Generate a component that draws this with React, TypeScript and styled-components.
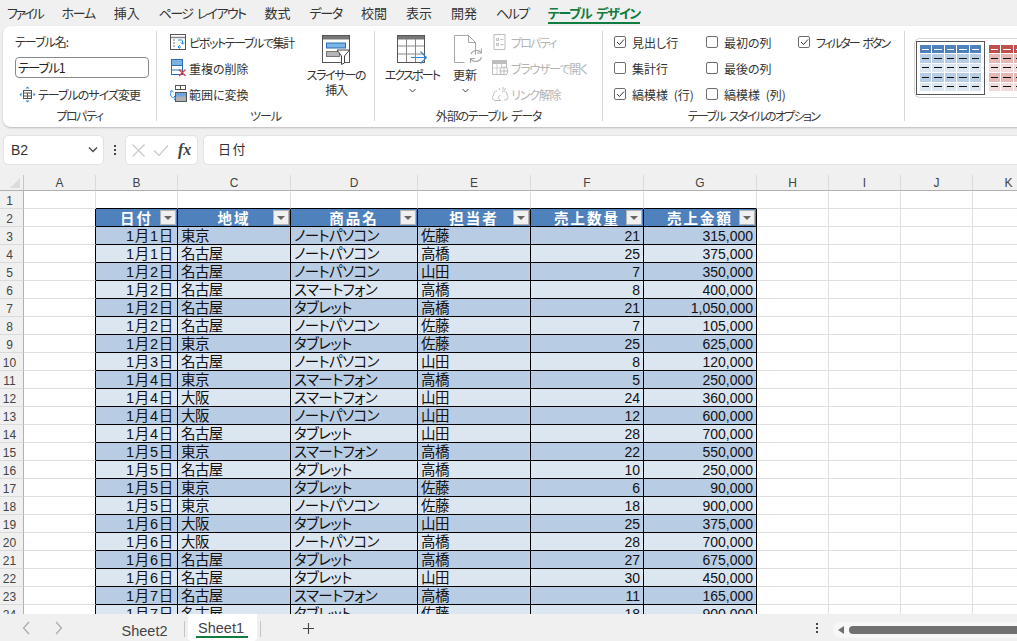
import React from "react";
import styled, { createGlobalStyle } from "styled-components";

const uiFont = `"Noto Sans CJK JP", "Noto Sans", sans-serif`;
const cellFont = `"Liberation Sans", "Noto Sans CJK JP", sans-serif`;

const Global = createGlobalStyle`
  html, body { margin: 0; padding: 0; height: 100%; background: #f0f0f0; overflow: hidden; }
  #root { height: 641px; width: 1017px; overflow: hidden; }
  * { box-sizing: border-box; }
`;

const Page = styled.div`
  width: 1017px; height: 641px; display: flex; flex-direction: column;
  background: #f0f0f0; font-family: ${uiFont}; color: #262626; overflow: hidden;
  font-feature-settings: "palt"; word-spacing: 3px;
`;

const MenuBar = styled.nav`
  height: 26px; flex: none; display: flex; align-items: flex-start; padding: 3px 0 0 7px; gap: 19px;
  font-size: 13px; line-height: 19px; color: #333;
`;
const MenuItem = styled.span<{ $active?: boolean; $s?: number }>`
  white-space: nowrap; height: 21px; letter-spacing: ${p => p.$s ?? 0}px;
  color: ${p => (p.$active ? "#107c41" : "#333")};
  font-weight: ${p => (p.$active ? 700 : 400)};
  border-bottom: ${p => (p.$active ? "2px solid #107c41" : "none")};
`;

const Ribbon = styled.section`
  height: 101px; flex: none; margin-left: 3px; width: 1030px; background: #fff; border-radius: 8px;
  box-shadow: 0 1px 2px rgba(0,0,0,.22); display: flex; padding-top: 5px; overflow: hidden;
`;
const Group = styled.div<{ $w: number }>`
  width: ${p => p.$w}px; flex: none; height: 90px; border-right: 1px solid #d6d6d6;
  display: flex; flex-direction: column;
`;
const GroupBody = styled.div`
  height: 72px; flex: none; display: flex;
`;
const GroupLabel = styled.div<{ $s: number }>`
  flex: 1; display: flex; align-items: center; justify-content: center; font-size: 12px; line-height: 16px; color: #3a3a3a; white-space: nowrap; padding-top: 5px;
  letter-spacing: ${p => p.$s}px;
`;
const Column = styled.div<{ $pad?: string; $w?: number }>`
  display: flex; flex-direction: column; padding: ${p => p.$pad || "0"}; ${p => (p.$w ? `width:${p.$w}px;flex:none;` : "")}
`;
const SmallColumn = styled(Column)`
  margin-top: -2px;
`;
const PropLabel = styled.div`
  font-size: 12px; line-height: 18px; height: 26px; flex: none; padding: 2px 0 0 12px; color: #333; letter-spacing: -1px;
`;
const NameInput = styled.div`
  margin-left: 12px; width: 134px; height: 21px; flex: none; border: 1px solid #8a8a8a; border-radius: 4px;
  font-size: 12.5px; line-height: 19px; padding-left: 2px; color: #222; letter-spacing: -1.2px;
`;
const SmallBtn = styled.div<{ $off?: boolean; $s?: number }>`
  height: 26px; flex: none; display: flex; align-items: center; gap: 2px; font-size: 12px; white-space: nowrap;
  color: ${p => (p.$off ? "#b4b4b4" : "#333")};
  letter-spacing: ${p => p.$s ?? 0}px;
  svg { flex: none; }
`;
const BigBtn = styled.div<{ $w: number; $s?: number }>`
  width: ${p => p.$w}px; flex: none; display: flex; flex-direction: column; align-items: center;
  font-size: 12px; line-height: 15px; text-align: center; color: #333; padding-top: 4px; white-space: nowrap;
  letter-spacing: ${p => p.$s ?? 0}px;
  svg { flex: none; margin-bottom: 2px; }
`;
const Chevron = styled.svg`
  display: block; margin-top: 6px;
`;

const CheckRow = styled.div<{ $s?: number }>`
  height: 26px; flex: none; display: flex; align-items: center; gap: 6px; font-size: 12px; white-space: nowrap; color: #333;
  letter-spacing: ${p => p.$s ?? 0}px;
`;
const CheckBox = styled.span`
  width: 12px; height: 12px; flex: none; border: 1px solid #6e6e6e; border-radius: 2px; display: flex; align-items: center; justify-content: center;
`;

const Gallery = styled.div`
  margin: 7px 0 0 9px; width: 140px; height: 60px; border: 1px solid #d8d8d8; border-right: none; border-radius: 6px 0 0 6px;
  padding: 2px 0 0 1px; display: flex; overflow: hidden;
`;
const Swatch = styled.div<{ $sel?: boolean }>`
  width: 69px; height: 54px; flex: none; padding: 3px; border: 1px solid ${p => (p.$sel ? "#555" : "transparent")};
  display: grid; grid-template-columns: repeat(5, 11.4px); grid-auto-rows: 8.4px; gap: 1px;
`;
const SwatchCell = styled.div<{ $bg: string; $dash: string }>`
  background: ${p => p.$bg}; position: relative;
  &::after { content: ""; position: absolute; left: 2px; right: 2px; top: 3.5px; height: 1px; background: ${p => p.$dash}; }
`;

const FormulaBar = styled.div`
  height: 30px; flex: none; margin-top: 8px; display: flex; align-items: stretch; padding-left: 3px;
`;
const NameBox = styled.div`
  width: 101px; background: #fff; border: 1px solid #e2e2e2; border-radius: 5px; display: flex; align-items: center; justify-content: space-between;
  padding: 0 4px 0 7px; font-size: 14px; color: #333; font-family: "Liberation Sans", sans-serif;
`;
const Dots = styled.div`
  width: 21px; display: flex; flex-direction: column; align-items: center; justify-content: center; gap: 2px;
`;
const Dot = styled.i`
  width: 2px; height: 2px; background: #444; display: block;
`;
const FxBox = styled.div`
  width: 73px; background: #fff; border: 1px solid #e2e2e2; border-radius: 5px; display: flex; align-items: center; gap: 8px; padding-left: 6px;
`;
const Fx = styled.span`
  font-family: "Liberation Serif", serif; font-style: italic; font-weight: 700; font-size: 16px; color: #444; margin-left: 1px;
`;
const FormulaInput = styled.div`
  flex: 1; margin-left: 5px; background: #fff; border: 1px solid #e2e2e2; border-right: none; border-radius: 5px 0 0 5px; padding-left: 14px;
  font-size: 13px; line-height: 26px; color: #333; letter-spacing: 1.5px;
`;

const SheetArea = styled.div`
  margin-top: 10px; height: 439px; flex: none; overflow: hidden; background: #fff;
`;
const Grid = styled.div`
  display: grid;
  grid-template-columns: 24px 72px 82px 113px 127px 113px 113px 113px 72px 72px 72px 72px;
  grid-auto-rows: 18px; width: 1044px;
  grid-template-rows: 16px;
`;
const Corner = styled.div`
  background: #f0f0f0; border-right: 1px solid #c6c6c6; border-bottom: 1px solid #b0b0b0; position: relative; overflow: hidden;
  &::after { content: ""; position: absolute; right: 3px; bottom: 2px; border-style: solid; border-width: 0 0 10px 10px; border-color: transparent transparent #dcdcdc transparent; }
`;
const ColHead = styled.div`
  background: #f0f0f0; border-right: 1px solid #dadada; border-bottom: 1px solid #b0b0b0; font-family: "Liberation Sans", sans-serif;
  font-size: 12px; color: #444; text-align: center; line-height: 17px;
`;
const RowHead = styled.div`
  background: #f0f0f0; border-right: 1px solid #b0b0b0; border-bottom: 1px solid #dadada; font-family: "Liberation Sans", sans-serif;
  font-size: 12px; color: #444; text-align: center; line-height: 20px; padding-right: 4px;
`;
const Empty = styled.div<{ $edgeRight?: boolean; $edgeBottom?: boolean }>`
  border-right: 1px solid ${p => (p.$edgeRight ? "#000" : "#dfdfdf")};
  border-bottom: 1px solid ${p => (p.$edgeBottom ? "#000" : "#dfdfdf")};
  background: #fff;
`;
const HeadCell = styled.div`
  background: #4f81bd; color: #fff; font-size: 14.5px; font-weight: 700; line-height: 17px; white-space: nowrap; position: relative;
  border-right: 1px solid #000; border-bottom: 1px solid #000; display: flex; justify-content: center; align-items: center;
  letter-spacing: 2px; font-family: ${uiFont}; font-feature-settings: normal;
`;
const FilterBtn = styled.span`
  position: absolute; right: 1px; top: 1px; width: 16px; height: 15px; background: #f0f0f0; border: 1px solid #b5b5b5; display: flex; align-items: center; justify-content: center;
  &::after { content: ""; border-style: solid; border-width: 4px 4px 0 4px; border-color: #666 transparent transparent transparent; }
`;
const Cell = styled.div<{ $odd: boolean; $kind: "date" | "text" | "num" }>`
  background: ${p => (p.$odd ? "#b8cce4" : "#dce6f1")}; border-right: 1px solid #000; border-bottom: 1px solid #000;
  font-family: ${cellFont}; line-height: 19px; color: #111; white-space: nowrap; overflow: hidden;
  text-align: ${p => (p.$kind === "text" ? "left" : "right")};
  padding: ${p => (p.$kind === "text" ? "0 0 0 3px" : "0 3px 0 0")};
  letter-spacing: ${p => (p.$kind === "date" ? ".7px" : p.$kind === "text" ? "-.6px" : "0")};
  font-size: ${p => (p.$kind === "num" ? "14px" : "14.5px")};
`;

const BottomBar = styled.div`
  flex: 1; display: flex; align-items: stretch; background: #f0f0f0;
`;
const NavArrows = styled.div`
  width: 108px; flex: none; display: flex; align-items: center; gap: 23px; padding-left: 22px;
`;
const TabItem = styled.div<{ $active?: boolean }>`
  width: ${p => (p.$active ? "69px" : "73px")}; flex: none; font-family: "Liberation Sans", sans-serif; font-size: 14.5px; text-align: center; color: #444;
  line-height: 20px; height: 27px; padding-top: ${p => (p.$active ? "4px" : "7px")};
  padding-right: ${p => (p.$active ? "3px" : "0")};
  background: ${p => (p.$active ? "#fff" : "transparent")};
  border-radius: ${p => (p.$active ? "0 0 4px 4px" : "0")};
  position: relative;
  ${p => (p.$active ? `&::after { content: ""; position: absolute; left: 8px; right: 9px; bottom: 3px; height: 2px; background: #107c41; }` : "")}
`;
const TabSep = styled.div`
  width: 1px; height: 16px; background: #c4c4c4; margin: 7px 3px 0 3px; flex: none;
`;
const Plus = styled.div`
  width: 88px; flex: none; display: flex; align-items: center; justify-content: center; padding-top: 2px;
`;
const Spacer = styled.div`
  flex: 1;
`;
const BottomDots = styled(Dots)`
  width: 14px; margin-right: 9px;
`;
const ScrollTrack = styled.div`
  width: 184px; flex: none; height: 16px; margin-top: 8px; background: #f7f7f7; border-radius: 8px 0 0 8px; display: flex; align-items: center; padding-left: 5px; gap: 5px;
`;
const ScrollThumb = styled.div`
  flex: 1; height: 8px; background: #707070; border-radius: 4px 0 0 4px;
`;
const ScrollLeft = styled.span`
  border-style: solid; border-width: 4px 6px 4px 0; border-color: transparent #707070 transparent transparent; flex: none;
`;

const PivotIcon = () => (
  <svg width="18" height="18" viewBox="-1 -1 18 18" fill="none"><rect x=".5" y=".5" width="15" height="15" fill="#fff" stroke="#555"/><path d="M1 3.500h14" stroke="#888" strokeWidth="1.500"/><path d="M3 6h2M3 9h2M3 12h2" stroke="#777"/><path d="M8 6h3.500a1 1 0 0 1 1 1v3M11 8.500l1.500 1.700L14 8.500M11 13H8.500M10 11l-2 2 2 1.500" stroke="#2b88d8"/></svg>
);
const DedupeIcon = () => (
  <svg width="18" height="18" viewBox="0 0 18 18" fill="none"><rect x="2.500" y=".5" width="11" height="15" fill="#fff" stroke="#2a6fb5"/><rect x="3" y="1" width="10" height="5" fill="#7db2e0"/><path d="M3 6.500h10M3 11h10" stroke="#2a6fb5"/><path d="M10 10.500l6.500 6.500M16.500 10.500L10 17" stroke="#e0394a" strokeWidth="1.300"/></svg>
);
const ConvertIcon = () => (
  <svg width="18" height="18" viewBox="0 0 18 18" fill="none"><rect x="6.500" y=".5" width="5" height="4" stroke="#555"/><rect x="11.500" y=".5" width="5" height="4" stroke="#555"/><rect x="6.500" y="7.500" width="11" height="9" fill="#b0b0b0" stroke="#555"/><rect x="7" y="8" width="10" height="3.500" fill="#6aa5dc"/><path d="M2.500 6.500c-2 3-1 6.500 4 6.500M5 11l2 2-2 2M1 7l1.500-1.500L4.500 7" stroke="#2b88d8" fill="none"/></svg>
);
const ResizeIcon = () => (
  <svg width="17" height="17" viewBox="0 0 17 17" fill="none"><rect x="4.500" y="4.500" width="8" height="8" stroke="#555"/><path d="M4.500 7h8M4.500 10h8M8.500 7v5.500" stroke="#555"/><path d="M8.500 .5l-2 2h4zM8.500 16.500l-2-2h4zM.5 8.500l2-2v4zM16.500 8.500l-2-2v4z" fill="#2b88d8"/></svg>
);
const SlicerIcon = () => (
  <svg width="28" height="30" viewBox="0 0 28 30" fill="none"><rect x=".5" y=".5" width="27" height="27" fill="#fff" stroke="#555"/><rect x="1" y="1" width="26" height="3.500" fill="#777"/><rect x="4.500" y="8" width="19" height="5" fill="#7db4e6" stroke="#2a6fb5"/><rect x="4.500" y="16.500" width="13" height="5" fill="#b5b5b5" stroke="#777"/><path d="M15 15h12.500l-5 6v7l-3 1.500V21z" fill="#fff" stroke="#444"/></svg>
);
const ExportIcon = () => (
  <svg width="30" height="30" viewBox="0 0 30 30" fill="none"><rect x=".5" y=".5" width="27" height="27" fill="#fff" stroke="#555"/><rect x="1" y="1" width="26" height="3.500" fill="#777"/><path d="M1 11h26M1 19h26M9.500 4v23M18.500 4v23" stroke="#888"/><path d="M14 22.500h15M23.500 16.500l6 6-6 6" stroke="#2b88d8" strokeWidth="1.200" fill="none"/></svg>
);
const RefreshIcon = () => (
  <svg width="34" height="30" viewBox="-6 0 34 30" fill="none"><path d="M.5.500h14l7 7v12M.5.500v27h10" stroke="#a8a8a8" fill="#fff"/><path d="M14.500.500v7h7" stroke="#a8a8a8"/><path d="M17 19a6 6 0 0 1 10-1.500M27.500 22a6 6 0 0 1-11 1.500" stroke="#a8a8a8" strokeWidth="1.200"/><path d="M27.500 13.500v4.500h-4.500M16.500 28v-4.500H21" stroke="#a8a8a8" strokeWidth="1.200"/></svg>
);
const PropIcon = () => (
  <svg width="18" height="16" viewBox="-1.500 0 18 16" fill="none"><path d="M1.500.500h11v15h-11z" stroke="#bdbdbd"/><path d="M4 4.500h2v2H4zM4 9.500h2v2H4z" stroke="#bdbdbd"/><path d="M8 5.500h3M8 10.500h3" stroke="#bdbdbd"/></svg>
);
const BrowserIcon = () => (
  <svg width="18" height="16" viewBox="0 0 18 16" fill="none"><rect x="1.500" y=".5" width="14" height="14" stroke="#bdbdbd"/><rect x="2" y="1" width="13" height="3" fill="#bdbdbd"/><path d="M2 8h13M6 4v10M10.500 4v10" stroke="#cfcfcf"/><circle cx="13" cy="11" r="4" fill="#fff" stroke="#bdbdbd"/><path d="M9 11h8M13 7v8" stroke="#bdbdbd"/></svg>
);
const UnlinkIcon = () => (
  <svg width="18" height="17" viewBox="0 0 18 17" fill="none"><path d="M6 5a3 3 0 0 0-3 4 3 3 0 0 0 1 5.500h6M11 6a3 3 0 0 1 5 3 3 3 0 0 1-1 5h-2" stroke="#bdbdbd"/><path d="M9 9.500c-2 0-2 4 0 4M12 1v3M15 2l-2 2M8 2l1 2" stroke="#bdbdbd"/></svg>
);
const Tick = () => (
  <svg width="9" height="8" viewBox="0 0 9 8" fill="none"><path d="M1 4l2.500 2.500L8 1.500" stroke="#333" strokeWidth="1"/></svg>
);
const ChevronDown = () => (
  <Chevron width="7" height="5" viewBox="0 0 7 5" fill="none"><path d="M.5 1l3 3 3-3" stroke="#444"/></Chevron>
);
const Arrow = ({ d }: { d: string }) => (
  <svg width="9" height="14" viewBox="0 0 9 14" fill="none"><path d={d} stroke="#aaa" strokeWidth="1.200"/></svg>
);

const checks: [string, boolean, number][][] = [
  [["見出し行", true, 0], ["集計行", false, 0], ["縞模様 (行)", true, 0]],
  [["最初の列", false, 0], ["最後の列", false, 0], ["縞模様 (列)", false, 0]],
  [["フィルター ボタン", true, -2]],
];

const blue = { head: "#4f81bd", a: "#b8cce4", b: "#dce6f1" };
const red = { head: "#c0504d", a: "#e6b8b7", b: "#f2dcdb" };
const StyleSwatch = ({ c, sel }: { c: typeof blue; sel?: boolean }) => (
  <Swatch $sel={sel}>
    {[c.head, c.a, c.b, c.a, c.b].flatMap((bg, r) =>
      [0, 1, 2, 3, 4].map(i => <SwatchCell key={`${r}-${i}`} $bg={bg} $dash={r === 0 ? "#fff" : "#111"} />)
    )}
  </Swatch>
);

const menus: [string, number][] = [["ファイル", -2.4], ["ホーム", -1.3], ["挿入", 0], ["ページ レイアウト", -1.6], ["数式", 0], ["データ", -1.3], ["校閲", 0], ["表示", 0], ["開発", 0], ["ヘルプ", -1.5]];
const cols = ["A", "B", "C", "D", "E", "F", "G", "H", "I", "J", "K"];
const headers = ["日付", "地域", "商品名", "担当者", "売上数量", "売上金額"];
const rows: string[][] = [
  ["1月1日", "東京", "ノートパソコン", "佐藤", "21", "315,000"],
  ["1月1日", "名古屋", "ノートパソコン", "高橋", "25", "375,000"],
  ["1月2日", "名古屋", "ノートパソコン", "山田", "7", "350,000"],
  ["1月2日", "名古屋", "スマートフォン", "高橋", "8", "400,000"],
  ["1月2日", "名古屋", "タブレット", "高橋", "21", "1,050,000"],
  ["1月2日", "名古屋", "ノートパソコン", "佐藤", "7", "105,000"],
  ["1月2日", "東京", "タブレット", "佐藤", "25", "625,000"],
  ["1月3日", "名古屋", "ノートパソコン", "山田", "8", "120,000"],
  ["1月4日", "東京", "スマートフォン", "高橋", "5", "250,000"],
  ["1月4日", "大阪", "スマートフォン", "山田", "24", "360,000"],
  ["1月4日", "大阪", "ノートパソコン", "山田", "12", "600,000"],
  ["1月4日", "名古屋", "タブレット", "山田", "28", "700,000"],
  ["1月5日", "東京", "スマートフォン", "高橋", "22", "550,000"],
  ["1月5日", "名古屋", "タブレット", "高橋", "10", "250,000"],
  ["1月5日", "東京", "タブレット", "佐藤", "6", "90,000"],
  ["1月5日", "東京", "ノートパソコン", "佐藤", "18", "900,000"],
  ["1月6日", "大阪", "タブレット", "山田", "25", "375,000"],
  ["1月6日", "大阪", "ノートパソコン", "高橋", "28", "700,000"],
  ["1月6日", "名古屋", "タブレット", "高橋", "27", "675,000"],
  ["1月6日", "名古屋", "タブレット", "山田", "30", "450,000"],
  ["1月7日", "名古屋", "スマートフォン", "高橋", "11", "165,000"],
  ["1月7日", "名古屋", "タブレット", "佐藤", "18", "900,000"],
];

const Tail = () => (
  <>
    {[0, 1, 2, 3].map(i => <Empty key={i} />)}
  </>
);

export default function App() {
  return (
    <Page>
      <Global />
      <MenuBar>
        {menus.map(([m, s]) => <MenuItem key={m} $s={s}>{m}</MenuItem>)}
        <MenuItem $active $s={-1.2}>テーブル デザイン</MenuItem>
      </MenuBar>
      <Ribbon>
        <Group $w={154}>
          <GroupBody>
            <Column>
              <PropLabel>テーブル名:</PropLabel>
              <NameInput>テーブル1</NameInput>
              <Column $pad="3px 0 0 16px"><SmallBtn $s={-1}><ResizeIcon />テーブルのサイズ変更</SmallBtn></Column>
            </Column>
          </GroupBody>
          <GroupLabel $s={-1.5}>プロパティ</GroupLabel>
        </Group>
        <Group $w={218}>
          <GroupBody>
            <SmallColumn $pad="0 0 0 12px" $w={146}>
              <SmallBtn $s={-1.4}><PivotIcon />ピボットテーブルで集計</SmallBtn>
              <SmallBtn><DedupeIcon />重複の削除</SmallBtn>
              <SmallBtn><ConvertIcon />範囲に変換</SmallBtn>
            </SmallColumn>
            <BigBtn $w={66} $s={-1.3}><SlicerIcon />スライサーの<br />挿入</BigBtn>
          </GroupBody>
          <GroupLabel $s={-1}>ツール</GroupLabel>
        </Group>
        <Group $w={228}>
          <GroupBody>
            <BigBtn $w={74} $s={-1.8}><ExportIcon />エクスポート<ChevronDown /></BigBtn>
            <BigBtn $w={32}><RefreshIcon />更新<ChevronDown /></BigBtn>
            <SmallColumn $pad="0 0 0 10px">
              <SmallBtn $off $s={-1.8}><PropIcon />プロパティ</SmallBtn>
              <SmallBtn $off $s={-1.2}><BrowserIcon />ブラウザーで開く</SmallBtn>
              <SmallBtn $off $s={-1.2}><UnlinkIcon />リンク解除</SmallBtn>
            </SmallColumn>
          </GroupBody>
          <GroupLabel $s={-1.2}>外部のテーブル データ</GroupLabel>
        </Group>
        <Group $w={302}>
          <GroupBody>
            {checks.map((col, i) => (
              <SmallColumn key={i} $w={i === 2 ? 110 : 92} $pad="0 0 0 11px">
                {col.map(([label, on, s]) => (
                  <CheckRow key={label} $s={s}>
                    <CheckBox>{on && <Tick />}</CheckBox>{label}
                  </CheckRow>
                ))}
              </SmallColumn>
            ))}
          </GroupBody>
          <GroupLabel $s={-1.7}>テーブル スタイルのオプション</GroupLabel>
        </Group>
        <Gallery>
          <StyleSwatch c={blue} sel />
          <StyleSwatch c={red} />
        </Gallery>
      </Ribbon>
      <FormulaBar>
        <NameBox>B2<svg width="12" height="8" viewBox="0 0 12 8" fill="none"><path d="M2 1.500l4 4 4-4" stroke="#444" strokeWidth="1.300"/></svg></NameBox>
        <Dots><Dot /><Dot /><Dot /></Dots>
        <FxBox>
          <svg width="13" height="13" viewBox="0 0 13 13" fill="none"><path d="M.5.500l12 12M12.500.500l-12 12" stroke="#c8c8c8" strokeWidth="1.200"/></svg>
          <svg width="16" height="13" viewBox="0 0 16 13" fill="none"><path d="M1 6.500l5 5L15 1.500" stroke="#c8c8c8" strokeWidth="1.200"/></svg>
          <Fx>fx</Fx>
        </FxBox>
        <FormulaInput>日付</FormulaInput>
      </FormulaBar>
      <SheetArea>
        <Grid>
          <Corner />
          {cols.map(c => <ColHead key={c}>{c}</ColHead>)}
          <RowHead>1</RowHead>
          {cols.map((c, i) => <Empty key={c} $edgeBottom={i >= 1 && i <= 6} />)}
          <RowHead>2</RowHead>
          <Empty $edgeRight />
          {headers.map(h => <HeadCell key={h}>{h}<FilterBtn /></HeadCell>)}
          <Tail />
          {rows.map((r, i) => (
            <React.Fragment key={i}>
              <RowHead>{i + 3}</RowHead>
              <Empty $edgeRight />
              {r.map((v, j) => <Cell key={j} $odd={i % 2 === 0} $kind={j === 0 ? "date" : j >= 4 ? "num" : "text"}>{v}</Cell>)}
              <Tail />
            </React.Fragment>
          ))}
        </Grid>
      </SheetArea>
      <BottomBar>
        <NavArrows>
          <Arrow d="M7 1L1.500 7 7 13" />
          <Arrow d="M2 1l5.500 6L2 13" />
        </NavArrows>
        <TabItem>Sheet2</TabItem>
        <TabSep />
        <TabItem $active>Sheet1</TabItem>
        <TabSep />
        <Plus><svg width="13" height="13" viewBox="0 0 13 13" fill="none"><path d="M6.500 1v11M1 6.500h11" stroke="#444" strokeWidth="1.100"/></svg></Plus>
        <Spacer />
        <BottomDots><Dot /><Dot /><Dot /></BottomDots>
        <ScrollTrack><ScrollLeft /><ScrollThumb /></ScrollTrack>
      </BottomBar>
    </Page>
  );
}
